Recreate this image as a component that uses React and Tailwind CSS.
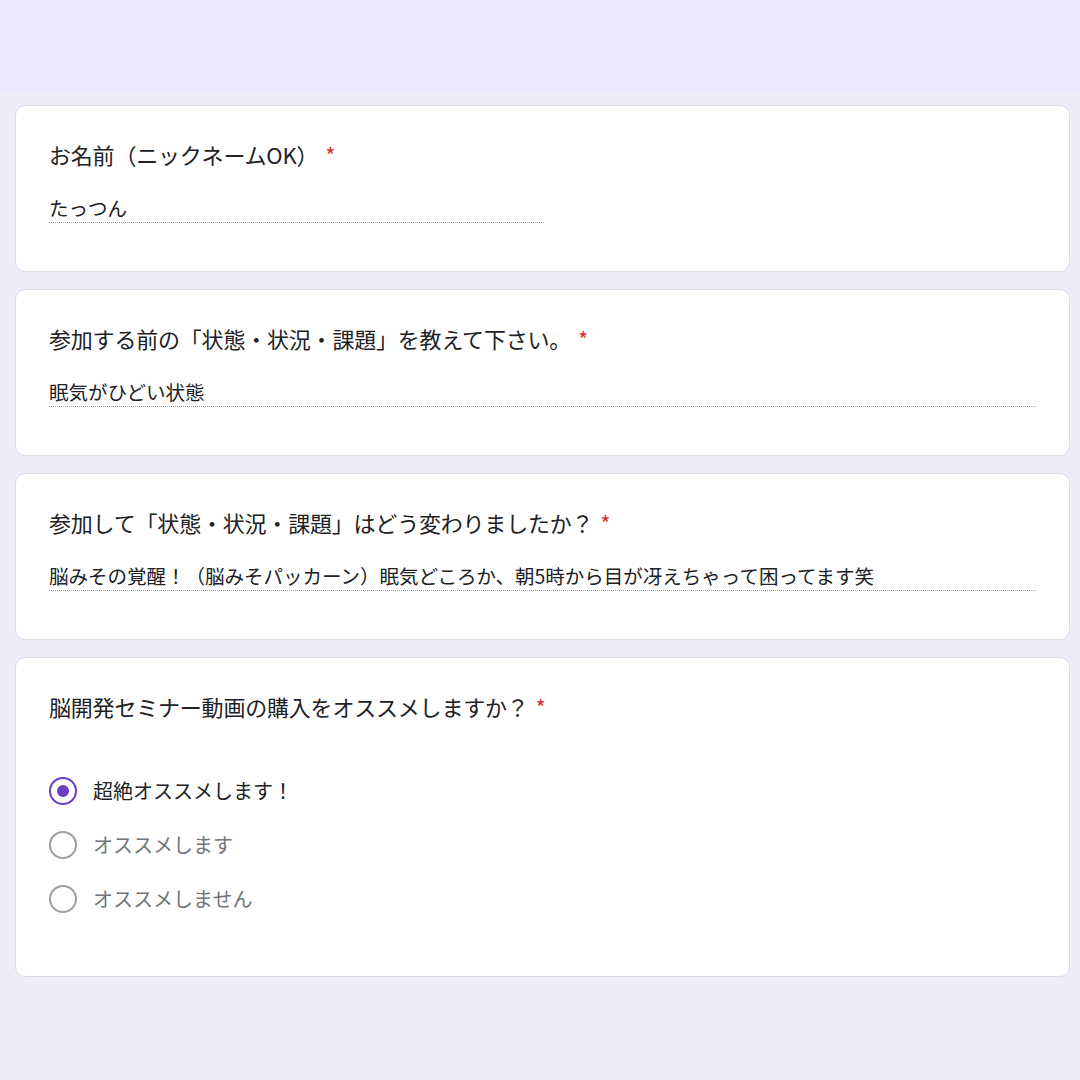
const font = { fontFamily: '"Noto Sans CJK JP", "Noto Sans", sans-serif' };

function Title({ children }) {
  return (
    <div className="text-[22px] leading-[30px] text-[#202124] tracking-[-0.2px]">
      {children}
      <span className="text-[#d93025] ml-[7px]">*</span>
    </div>
  );
}

function TextCard({ title, answer, narrow }) {
  return (
    <div className="bg-white border border-[#dadce0] rounded-[10px] px-[33px] pt-[33px] pb-[48px]">
      <Title>{title}</Title>
      <div
        className={`mt-[25px] border-b border-dotted border-[#9aa0a6] text-[19.5px] leading-[28px] text-[#202124] ${
          narrow ? "w-[495px]" : "w-full"
        }`}
      >
        {answer}
      </div>
    </div>
  );
}

function Radio({ label, checked }) {
  return (
    <div className="flex items-center h-[54px] gap-[16px]">
      <div
        className={`w-[28px] h-[28px] rounded-full border-[2.5px] flex items-center justify-center ${
          checked ? "border-[#6a3fc1]" : "border-[#9aa0a6]"
        }`}
      >
        {checked && <div className="w-[12px] h-[12px] rounded-full bg-[#6a3fc1]" />}
      </div>
      <span className={`text-[20px] ${checked ? "text-[#202124]" : "text-[#70757a]"}`}>{label}</span>
    </div>
  );
}

export default function App() {
  return (
    <div className="w-[1080px] h-[1080px] bg-[#efebf9] overflow-hidden" style={font}>
      <div className="h-[92px] bg-[#ece7fc]" />
      <div className="pl-[15px] pr-[10px] pt-[13px] flex flex-col gap-[17px]">
        <TextCard title="お名前（ニックネームOK）" answer="たっつん" narrow />
        <TextCard title="参加する前の「状態・状況・課題」を教えて下さい。" answer="眠気がひどい状態" />
        <TextCard
          title="参加して「状態・状況・課題」はどう変わりましたか？"
          answer="脳みその覚醒！（脳みそパッカーン）眠気どころか、朝5時から目が冴えちゃって困ってます笑"
        />
        <div className="bg-white border border-[#dadce0] rounded-[10px] px-[33px] pt-[33px] pb-[50px]">
          <Title>脳開発セミナー動画の購入をオススメしますか？</Title>
          <div className="mt-[43px] flex flex-col">
            <Radio label="超絶オススメします！" checked />
            <Radio label="オススメします" />
            <Radio label="オススメしません" />
          </div>
        </div>
      </div>
    </div>
  );
}
